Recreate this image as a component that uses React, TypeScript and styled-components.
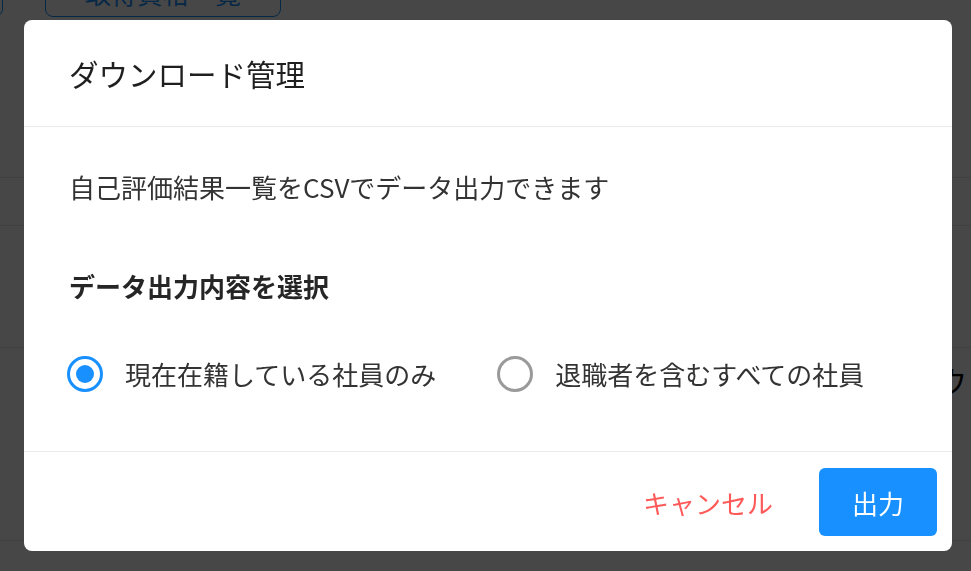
import React, { useState } from 'react';
import styled, { createGlobalStyle } from 'styled-components';

const GlobalStyle = createGlobalStyle`
  html, body {
    margin: 0;
    padding: 0;
    height: 100%;
    overflow: hidden;
    background: #ffffff;
    font-family: "Noto Sans CJK JP", "Noto Sans", sans-serif;
  }
`;

const OPTIONS = [
  { id: 'current', label: '現在在籍している社員のみ' },
  { id: 'all', label: '退職者を含むすべての社員' },
];

// 背景のページ（オーバーレイで暗くなる部分）
const Page = styled.div`
  margin-top: -33px;
`;

const Toolbar = styled.div`
  display: flex;
  gap: 42px;
  margin-left: -199px;
  padding-bottom: 78px;
`;

const OutlineButton = styled.div<{ width: number }>`
  width: ${props => props.width}px;
  height: 50px;
  box-sizing: border-box;
  border: 1px solid #1890ff;
  border-radius: 8px;
  color: #1890ff;
  font-size: 26px;
  display: flex;
  align-items: center;
  justify-content: center;
`;

const TableRow = styled.div<{ height: number }>`
  height: ${props => props.height}px;
  border-bottom: 1px solid #e6e6e6;
`;

const BackHeading = styled.div`
  display: flex;
  justify-content: flex-end;
  padding-right: 4px;
  font-size: 30px;
  color: #000;
  margin-top: -183px;
`;

const Overlay = styled.div`
  position: fixed;
  inset: 0;
  background: rgba(0, 0, 0, 0.72);
  display: flex;
  align-items: flex-start;
  padding: 20px 0 0 24px;
`;

const Modal = styled.div`
  width: 928px;
  background: #ffffff;
  border-radius: 8px;
  overflow: hidden;
`;

const Header = styled.div`
  height: 107px;
  display: flex;
  align-items: center;
  padding: 0 45px;
  border-bottom: 1px solid #ebebeb;
  box-sizing: border-box;
`;

const Title = styled.h2`
  margin: 0;
  font-size: 29.5px;
  font-weight: 400;
  color: #1f1f1f;
`;

const Body = styled.div`
  padding: 40px 45px 58px;
  color: #333333;
`;

const Description = styled.p`
  margin: 0;
  font-size: 26px;
  line-height: 39px;
`;

const SectionHeading = styled.h3`
  margin: 60px 0 0;
  font-size: 26px;
  line-height: 39px;
  font-weight: 700;
  color: #262626;
`;

const RadioGroup = styled.div`
  display: flex;
  align-items: center;
  gap: 61px;
  margin-top: 49px;
  margin-left: -2px;
`;

const RadioLabel = styled.label`
  display: flex;
  align-items: center;
  gap: 22px;
  font-size: 26px;
  line-height: 39px;
  color: #333333;
  cursor: pointer;
`;

const RadioCircle = styled.span<{ checked: boolean }>`
  width: 36px;
  height: 36px;
  box-sizing: border-box;
  border-radius: 50%;
  border: 3px solid ${props => props.checked ? '#1890ff' : '#9a9a9a'};
  display: flex;
  align-items: center;
  justify-content: center;

  &::after {
    content: '';
    width: 18px;
    height: 18px;
    border-radius: 50%;
    background: #1890ff;
    display: ${props => props.checked ? 'block' : 'none'};
  }
`;

const Footer = styled.div`
  border-top: 1px solid #ebebeb;
  padding: 16px 15px 15px;
  display: flex;
  justify-content: flex-end;
  align-items: center;
`;

const CancelButton = styled.button`
  border: none;
  background: transparent;
  color: #ff5a5a;
  font-family: inherit;
  font-size: 26px;
  padding: 0 24px;
  height: 68px;
  margin-right: 22px;
  cursor: pointer;
`;

const PrimaryButton = styled.button`
  width: 118px;
  height: 68px;
  border: none;
  border-radius: 6px;
  background: #1890ff;
  color: #ffffff;
  font-family: inherit;
  font-size: 26px;
  cursor: pointer;
`;

function App() {
  const [selected, setSelected] = useState('current');

  return (
    <>
      <GlobalStyle />
      <Page>
        <Toolbar>
          <OutlineButton width={202}>CSV出力</OutlineButton>
          <OutlineButton width={236}>取得資格一覧</OutlineButton>
        </Toolbar>
        <TableRow height={82} />
        <TableRow height={47} />
        <TableRow height={121} />
        <TableRow height={192} />
        <BackHeading>ウ</BackHeading>
      </Page>
      <Overlay>
        <Modal>
          <Header>
            <Title>ダウンロード管理</Title>
          </Header>
          <Body>
            <Description>自己評価結果一覧をCSVでデータ出力できます</Description>
            <SectionHeading>データ出力内容を選択</SectionHeading>
            <RadioGroup>
              {OPTIONS.map(option => (
                <RadioLabel key={option.id} onClick={() => setSelected(option.id)}>
                  <RadioCircle checked={selected === option.id} />
                  {option.label}
                </RadioLabel>
              ))}
            </RadioGroup>
          </Body>
          <Footer>
            <CancelButton>キャンセル</CancelButton>
            <PrimaryButton>出力</PrimaryButton>
          </Footer>
        </Modal>
      </Overlay>
    </>
  );
}

export default App;
